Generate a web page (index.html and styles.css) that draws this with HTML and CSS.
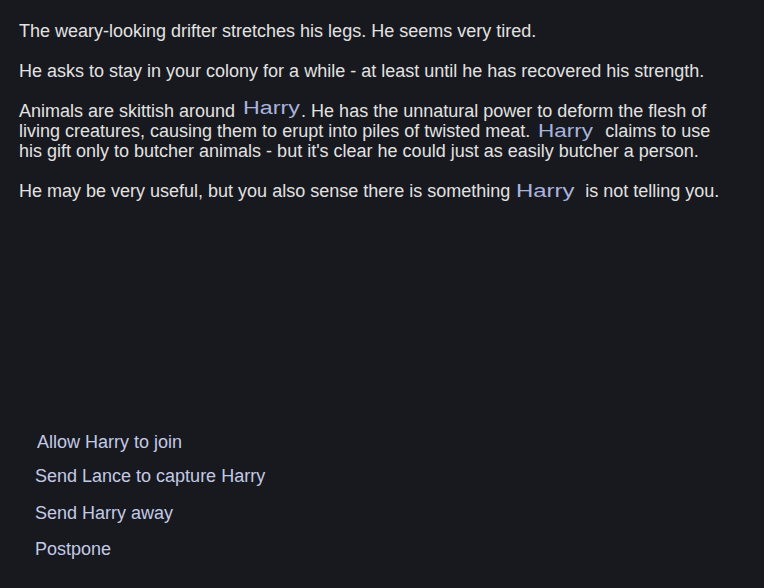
FILE: index.html
```html
<!DOCTYPE html>
<html>
<head>
<meta charset="utf-8">
<link rel="stylesheet" href="styles.css">
</head>
<body>
<div class="page">
  <div class="story">
    <p>The weary-looking drifter stretches his legs. He seems very tired.</p>
    <p>He asks to stay in your colony for a while - at least until he has recovered his strength.</p>
    <p>Animals are skittish around <span class="name big">Harry</span>. He has the unnatural power to deform the flesh of living creatures, causing them to erupt into piles of twisted meat. <span class="name mid">Harry</span>&nbsp; claims to use his gift only to butcher animals - but it's clear he could just as easily butcher a person.</p>
    <p>He may be very useful, but you also sense there is something <span class="name wide">Harry</span> is not telling you.</p>
  </div>
  <div class="options">
    <div class="opt first">Allow Harry to join</div>
    <div class="opt second">Send Lance to capture Harry</div>
    <div class="opt">Send Harry away</div>
    <div class="opt">Postpone</div>
  </div>
</div>
</body>
</html>
```
FILE: styles.css
```css
html, body {
  margin: 0;
  padding: 0;
  background: #17191e;
}
body {
  font-family: "Liberation Sans", Arial, sans-serif;
  color: #e2e2e2;
  width: 764px;
  height: 588px;
  overflow: hidden;
}
.page {
  padding: 21px 19px 0 19px;
}
.story {
  max-width: 708px;
}
.story p {
  margin: 0 0 20px 0;
  font-size: 18px;
  line-height: 20px;
}
.name {
  display: inline-block;
  color: #a9b4de;
  line-height: 16px;
  transform-origin: left 75%;
}
.name.big {
  margin-left: 3px;
  margin-right: 14px;
  transform: translateY(-3px) scaleX(1.29);
}
.name.mid {
  margin-left: 3px;
  margin-right: 13px;
  transform: scale(1.25, 1.03);
}
.name.wide {
  margin-left: 1px;
  margin-right: 20px;
  transform: scale(1.33, 1.05);
}
.options {
  margin-top: 231px;
  padding-left: 16px;
  display: flex;
  flex-direction: column;
}
.opt {
  color: #c3cae6;
  font-size: 18px;
  line-height: 20px;
  height: 36px;
}
.opt.first {
  padding-left: 2px;
  height: 34px;
}
.opt.second {
  height: 37px;
}
```
